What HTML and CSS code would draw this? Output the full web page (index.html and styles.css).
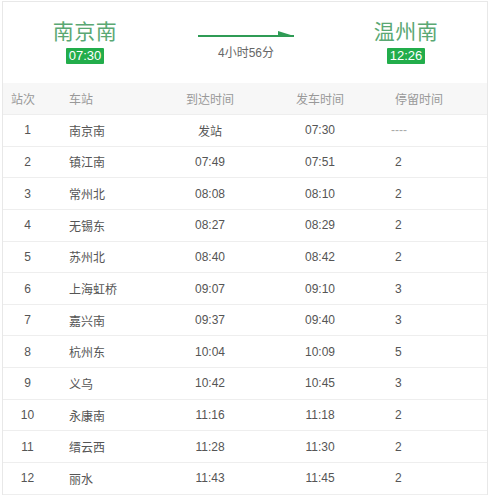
FILE: index.html
```html
<!DOCTYPE html>
<html>
<head>
<meta charset="utf-8">
<link rel="stylesheet" href="styles.css">
</head>
<body>
<div class="box">
  <div class="top">
    <div class="station">
      <div class="name">南京南</div>
      <span class="badge">07:30</span>
    </div>
    <div class="mid">
      <svg class="arrow" width="98" height="10" viewBox="0 0 98 10">
        <line x1="0" y1="7" x2="96" y2="7" stroke="#2f9b55" stroke-width="2"/>
        <polygon points="80,2 96,7 80,7" fill="#2f9b55"/>
      </svg>
      <div class="dur">4小时56分</div>
    </div>
    <div class="station">
      <div class="name">温州南</div>
      <span class="badge">12:26</span>
    </div>
  </div>
  <div class="row head">
    <div class="c1">站次</div><div class="c2">车站</div><div class="c3">到达时间</div><div class="c4">发车时间</div><div class="c5">停留时间</div>
  </div>
  <div class="row"><div class="c1">1</div><div class="c2">南京南</div><div class="c3">发站</div><div class="c4">07:30</div><div class="c5 dash">----</div></div>
  <div class="row"><div class="c1">2</div><div class="c2">镇江南</div><div class="c3">07:49</div><div class="c4">07:51</div><div class="c5">2</div></div>
  <div class="row"><div class="c1">3</div><div class="c2">常州北</div><div class="c3">08:08</div><div class="c4">08:10</div><div class="c5">2</div></div>
  <div class="row"><div class="c1">4</div><div class="c2">无锡东</div><div class="c3">08:27</div><div class="c4">08:29</div><div class="c5">2</div></div>
  <div class="row"><div class="c1">5</div><div class="c2">苏州北</div><div class="c3">08:40</div><div class="c4">08:42</div><div class="c5">2</div></div>
  <div class="row"><div class="c1">6</div><div class="c2">上海虹桥</div><div class="c3">09:07</div><div class="c4">09:10</div><div class="c5">3</div></div>
  <div class="row"><div class="c1">7</div><div class="c2">嘉兴南</div><div class="c3">09:37</div><div class="c4">09:40</div><div class="c5">3</div></div>
  <div class="row"><div class="c1">8</div><div class="c2">杭州东</div><div class="c3">10:04</div><div class="c4">10:09</div><div class="c5">5</div></div>
  <div class="row"><div class="c1">9</div><div class="c2">义乌</div><div class="c3">10:42</div><div class="c4">10:45</div><div class="c5">3</div></div>
  <div class="row"><div class="c1">10</div><div class="c2">永康南</div><div class="c3">11:16</div><div class="c4">11:18</div><div class="c5">2</div></div>
  <div class="row"><div class="c1">11</div><div class="c2">缙云西</div><div class="c3">11:28</div><div class="c4">11:30</div><div class="c5">2</div></div>
  <div class="row last"><div class="c1">12</div><div class="c2">丽水</div><div class="c3">11:43</div><div class="c4">11:45</div><div class="c5">2</div></div>
</div>
</body>
</html>
```

FILE: styles.css
```css
html, body {
  margin: 0;
  padding: 0;
  background: #fff;
}
body {
  font-family: "Liberation Sans", "Noto Sans CJK SC", sans-serif;
  color: #555;
  font-size: 12px;
}
.box {
  margin: 1px 0 0 2px;
  width: 486px;
  border: 1px solid #e8e8e8;
  border-bottom: none;
  box-sizing: border-box;
  height: 494px;
  overflow: hidden;
}
.top {
  display: grid;
  grid-template-columns: 164px 158px 162px;
  height: 81px;
}
.station {
  display: flex;
  flex-direction: column;
  align-items: center;
  padding-top: 17px;
}
.name {
  font-size: 21px;
  line-height: 26px;
  color: #5aa873;
  letter-spacing: 0.5px;
}
.badge {
  margin-top: 3px;
  background: #22ad4b;
  color: #fff;
  font-size: 13px;
  line-height: 16px;
  padding: 0 3px;
  border-radius: 1px;
}
.mid {
  display: flex;
  flex-direction: column;
  align-items: center;
  padding-top: 27px;
}
.arrow {
  display: block;
  margin-left: 2px;
}
.dur {
  margin-top: 7px;
  color: #666;
  font-size: 12px;
  line-height: 14px;
}
.row {
  display: grid;
  grid-template-columns: 49px 108px 100px 120px 1fr;
  height: 31.65px;
  align-items: center;
  border-bottom: 1px solid #eeeeee;
  box-sizing: border-box;
}
.row.head {
  background: #f7f7f7;
  color: #999;
  height: 32px;
}
.c1 { text-align: center; }
.head .c1 { text-align: left; padding-left: 8px; }
.c2 { padding-left: 17px; }
.c3 { text-align: center; }
.c4 { text-align: center; }
.c5 { padding-left: 15px; }
.dash { color: #aaa; padding-left: 11px; }
```
